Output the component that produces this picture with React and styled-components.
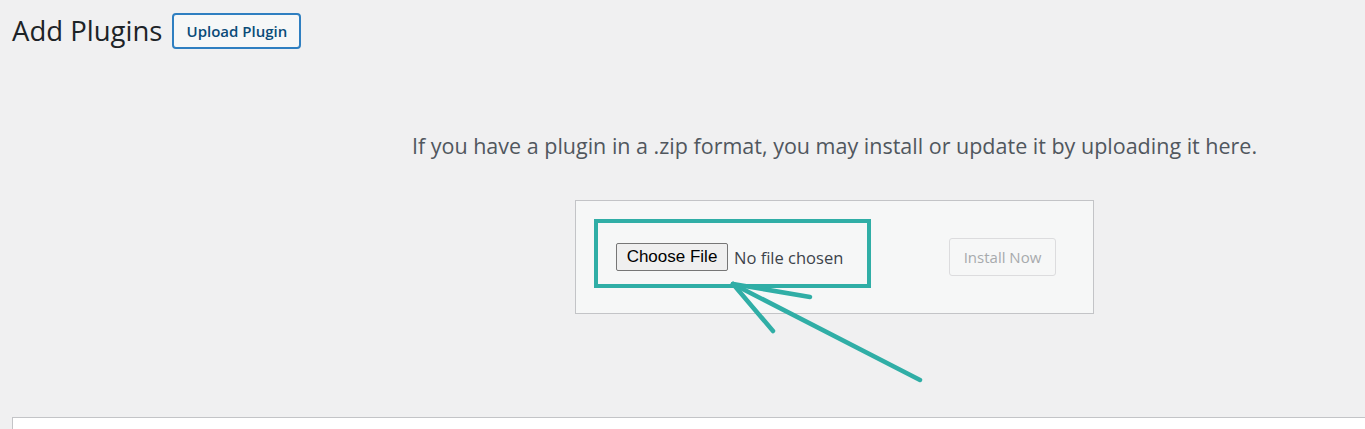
import React from 'react';
import styled, { createGlobalStyle } from 'styled-components';

const GlobalStyle = createGlobalStyle`
html, body {
  margin: 0;
  padding: 0;
  background-color: #f0f0f1;
  overflow: hidden;
  font-family: "Open Sans", "Noto Sans", sans-serif;
  color: #1d2327;
}
`

const Wrap = styled.div`
  padding-left: 12px;
  height: 100vh;
  display: flex;
  flex-direction: column;
  box-sizing: border-box;
`

const Header = styled.div`
  display: flex;
  align-items: center;
  gap: 10px;
  padding-top: 13px;
`

const Title = styled.h1`
  margin: 0;
  font-size: 27.5px;
  font-weight: 400;
  line-height: 36px;
  color: #1d2327;
`

const TitleAction = styled.a`
  display: inline-flex;
  align-items: center;
  justify-content: center;
  box-sizing: border-box;
  width: 129px;
  height: 36px;
  border: 2px solid #2f7fc1;
  border-radius: 4px;
  background-color: #f6f7f7;
  color: #0a4b78;
  font-size: 15px;
  font-weight: 600;
  text-decoration: none;
`

const UploadSection = styled.div`
  display: flex;
  flex-direction: column;
  align-items: center;
  padding-left: 292px;
`

const Help = styled.p`
  margin: 83px 0 0;
  font-size: 21.5px;
  line-height: 28px;
  color: #50575e;
  white-space: nowrap;
`

const UploadBox = styled.form`
  position: relative;
  display: flex;
  align-items: center;
  justify-content: space-between;
  box-sizing: border-box;
  width: 519px;
  height: 114px;
  margin-top: 40px;
  padding: 0 37px 0 40px;
  border: 1px solid #c3c4c7;
  background-color: #f6f7f7;
`

const FilePicker = styled.div`
  display: flex;
  align-items: center;
  gap: 6px;
`

const ChooseButton = styled.button`
  box-sizing: border-box;
  width: 112px;
  height: 28px;
  padding: 0;
  border: 1px solid #767676;
  border-radius: 2px;
  background-color: #efefef;
  color: #000;
  font-family: "Liberation Sans", Arial, sans-serif;
  font-size: 17px;
`

const FileName = styled.span`
  font-size: 16.5px;
  color: #3c434a;
`

const InstallButton = styled.button`
  box-sizing: border-box;
  width: 107px;
  height: 38px;
  padding: 0;
  border: 1px solid #dcdcde;
  border-radius: 3px;
  background-color: #f6f7f7;
  color: #a7aaad;
  font-family: "Open Sans", "Noto Sans", sans-serif;
  font-size: 15px;
`

const Annotation = styled.svg`
  position: absolute;
  left: 0;
  top: 0;
  overflow: visible;
  pointer-events: none;
`

const ListTable = styled.div`
  flex: 1;
  margin-top: 103px;
  border-top: 1px solid #c3c4c7;
  border-left: 1px solid #c3c4c7;
  background-color: #ffffff;
`

const teal = '#30aea6';

function App() {
  return (
    <>
      <GlobalStyle />
      <Wrap>
        <Header>
          <Title>Add Plugins</Title>
          <TitleAction href="#">Upload Plugin</TitleAction>
        </Header>

        <UploadSection>
          <Help>If you have a plugin in a .zip format, you may install or update it by uploading it here.</Help>
          <UploadBox onSubmit={e => e.preventDefault()}>
            <FilePicker>
              <ChooseButton type="button">Choose File</ChooseButton>
              <FileName>No file chosen</FileName>
            </FilePicker>
            <InstallButton type="button" disabled>Install Now</InstallButton>

            <Annotation width="360" height="190" viewBox="0 0 360 190">
              <rect x="20" y="20" width="273" height="65" fill="none" stroke={teal} strokeWidth="4" />
              <g stroke={teal} strokeWidth="4.5" strokeLinecap="round" fill="none">
                <line x1="157" y1="83" x2="344" y2="179" />
                <line x1="157" y1="83" x2="234" y2="96" />
                <line x1="157" y1="83" x2="197" y2="130" />
              </g>
            </Annotation>
          </UploadBox>
        </UploadSection>

        <ListTable />
      </Wrap>
    </>
  );
}

export default App;
